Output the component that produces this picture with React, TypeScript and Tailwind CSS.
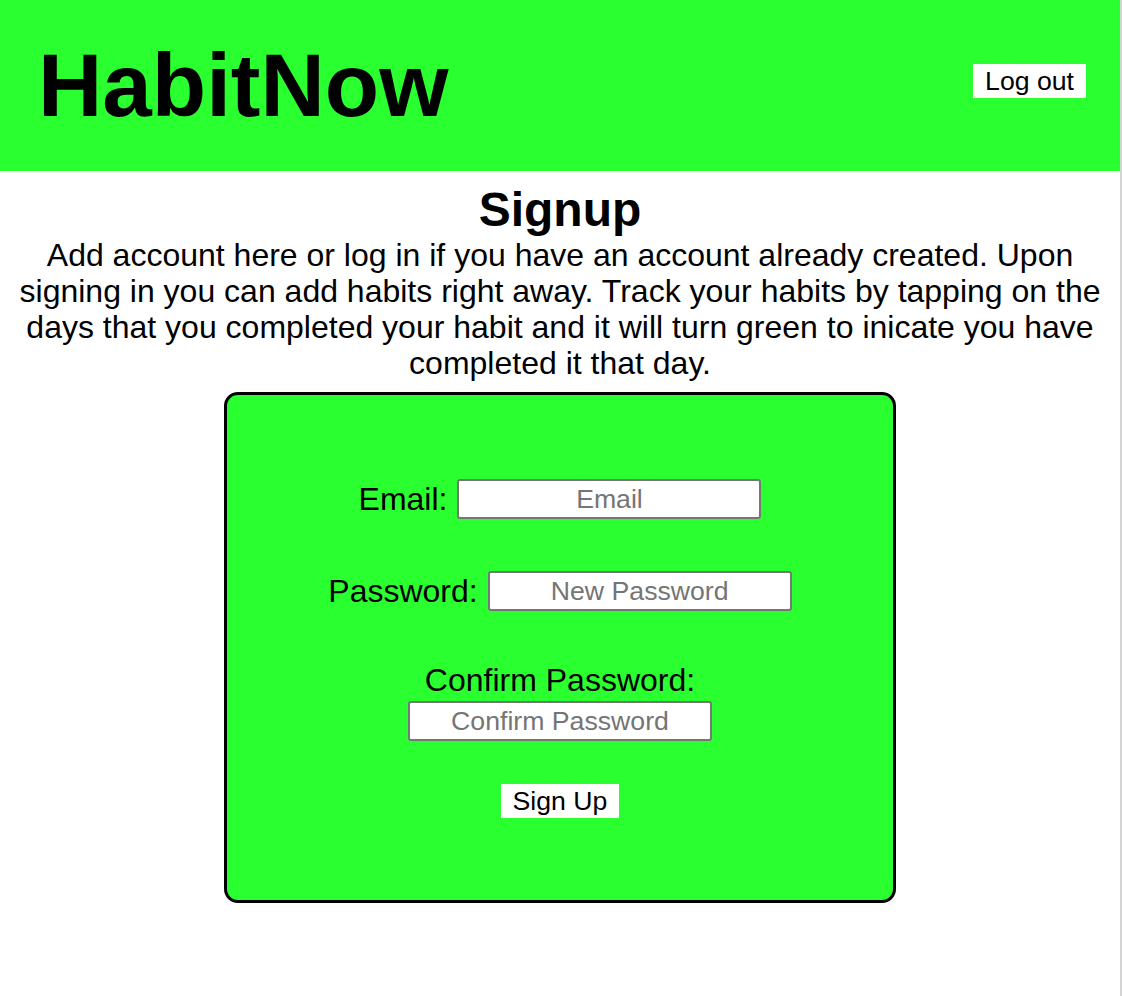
import React from "react";

function App() {
  return (
    <div className="flex min-h-[996px] bg-white font-['Liberation_Sans',Arial,Helvetica,sans-serif] text-black">
      <div className="w-[1120px]">
        {/* Header */}
        <header className="h-[171px] bg-[#2aff2f] flex items-center justify-between pl-[38px] pr-[34px]">
          <h1 className="text-[89px] font-bold leading-none">HabitNow</h1>
          <button className="bg-white h-[34px] px-[12px] text-[26.67px] leading-[30px] mb-[9px]">
            Log out
          </button>
        </header>

        {/* Signup intro */}
        <main className="text-center">
          <h2 className="mt-[11px] text-[48px] font-bold leading-[55px]">Signup</h2>
          <p className="text-[32px] leading-[36px] px-[4px]">
            Add account here or log in if you have an account already created.
            Upon signing in you can add habits right away. Track your habits by
            tapping on the days that you completed your habit and it will turn
            green to inicate you have completed it that day.
          </p>

          <div className="mx-auto mt-[11px] w-[672px] h-[511px] bg-[#2aff2f] border-[3px] border-black rounded-[14px] flex flex-col items-center pt-[84px]">
            <div className="flex items-center gap-[10px]">
              <label className="text-[32px] leading-[37px]">Email:</label>
              <input
                placeholder="Email"
                className="w-[304px] h-[40px] bg-white border-2 border-[#767676] rounded-[3px] text-center text-[26.67px] placeholder:text-[#757575]"
              />
            </div>
            <div className="flex items-center gap-[10px] mt-[52px]">
              <label className="text-[32px] leading-[37px]">Password:</label>
              <input
                type="password"
                placeholder="New Password"
                className="w-[304px] h-[40px] bg-white border-2 border-[#767676] rounded-[3px] text-center text-[26.67px] placeholder:text-[#757575]"
              />
            </div>
            <label className="mt-[51px] text-[32px] leading-[37px]">Confirm Password:</label>
            <input
              type="password"
              placeholder="Confirm Password"
              className="mt-[2px] w-[304px] h-[40px] bg-white border-2 border-[#767676] rounded-[3px] text-center text-[26.67px] placeholder:text-[#757575]"
            />
            <button className="mt-[43px] bg-white h-[34px] px-[12px] text-[26.67px] leading-[30px]">
              Sign Up
            </button>
          </div>
        </main>
      </div>
      <div className="w-[2px] bg-[#d4d4d4]" />
    </div>
  );
}

export default App;
